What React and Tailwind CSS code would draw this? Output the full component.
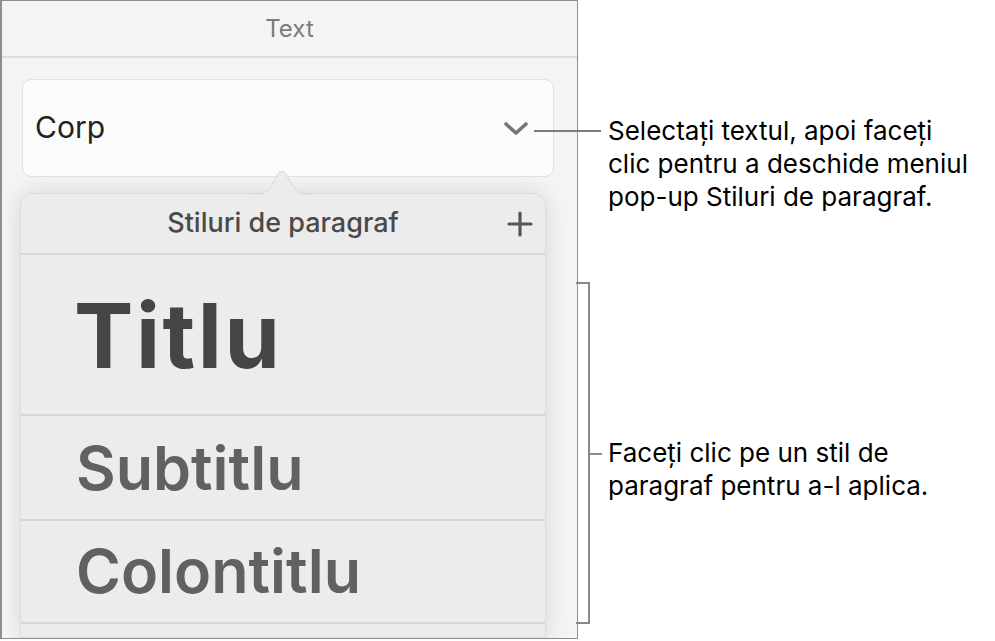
export default function App() {
  return (
    <div className="relative w-[995px] h-[641px] bg-white overflow-hidden flex font-['Inter',sans-serif]">
      {/* Left panel */}
      <div className="w-[578px] h-[639px] shrink-0 bg-[#f4f4f4] border border-[#8e8e8e] border-l-2 flex flex-col overflow-hidden">
        <div className="h-[57px] shrink-0 border-b-2 border-[#dedede] flex items-center justify-center text-[24px] text-[#7b7b7b]">
          Text
        </div>
        <div className="flex-1 flex flex-col pl-[20px] pr-[23px] pt-[21px]">
          <div className="h-[98px] shrink-0 rounded-[9px] border border-[#e2e2e2] bg-[#fbfbfb] flex items-center justify-between pl-[12px] pr-[24px]">
            <span className="text-[30px] text-[#222] pb-[2px]">Corp</span>
            <svg width="26" height="16" viewBox="0 0 26 16" className="mt-[2px]">
              <path d="M3 3 L13 12 L23 3" fill="none" stroke="#757575" strokeWidth="3.6" strokeLinecap="round" strokeLinejoin="round" />
            </svg>
          </div>
          {/* Popover */}
          <div className="relative mt-[16px] ml-[-2px] mr-[8px] flex-1 rounded-t-[13px] bg-[#ececec] border border-[#dcdcdc] shadow-[0_0_22px_rgba(0,0,0,0.13)] flex flex-col">
            <svg width="60" height="28" viewBox="0 0 60 28" className="absolute left-[231px] top-[-26px]">
              <path d="M0 26.5 C12 26.5 14 25 20 17 L26 6 C28 2.5 32 2.5 34 6 L40 17 C46 25 48 26.5 60 26.5 L60 28 L0 28 Z" fill="#ececec" stroke="#d8d8d8" strokeWidth="1" />
              <rect x="0" y="26.6" width="60" height="2" fill="#ececec" />
            </svg>
            <div className="h-[61px] shrink-0 border-b-2 border-[#d6d6d6] flex items-center justify-center relative">
              <span className="text-[27px] font-medium text-[#4a4a4a]">Stiluri de paragraf</span>
              <svg width="26" height="26" viewBox="0 0 26 26" className="absolute right-[12px] top-[17px]">
                <path d="M13 2 V24 M2 13 H24" stroke="#555" strokeWidth="3.2" strokeLinecap="round" />
              </svg>
            </div>
            <div className="h-[161px] shrink-0 border-b-2 border-[#d6d6d6] flex items-center pl-[53px]">
              <span className="text-[89px] font-bold text-[#454545] leading-none tracking-[2.5px] mt-[2px]">Titlu</span>
            </div>
            <div className="h-[105px] shrink-0 border-b-2 border-[#d6d6d6] flex items-center pl-[55px]">
              <span className="text-[61px] font-semibold text-[#616161] leading-none mt-[2px]">Subtitlu</span>
            </div>
            <div className="h-[103px] shrink-0 border-b-2 border-[#d6d6d6] flex items-center pl-[55px]">
              <span className="text-[61px] font-semibold text-[#616161] leading-none">Colontitlu</span>
            </div>
            <div className="flex-1" />
          </div>
        </div>
      </div>

      {/* Right annotations */}
      <div className="flex-1 flex flex-col pl-[30px] text-[26px] leading-[33px] text-black">
        <p className="mt-[114px]">
          Selectați textul, apoi faceți
          <br />
          clic pentru a deschide meniul
          <br />
          pop-up Stiluri de paragraf.
        </p>
        <p className="mt-[223px]">
          Faceți clic pe un stil de
          <br />
          paragraf pentru a-l aplica.
        </p>
      </div>

      {/* Leader lines */}
      <div className="absolute left-[534px] top-[130px] w-[67px] h-[2px] bg-[#7c7c7c]" />
      <div className="absolute left-[576px] top-[282px] w-[14px] h-[342px] border-t-2 border-r-2 border-b-2 border-[#8a8a8a]" />
      <div className="absolute left-[589px] top-[453px] w-[13px] h-[2px] bg-[#8a8a8a]" />
    </div>
  );
}
